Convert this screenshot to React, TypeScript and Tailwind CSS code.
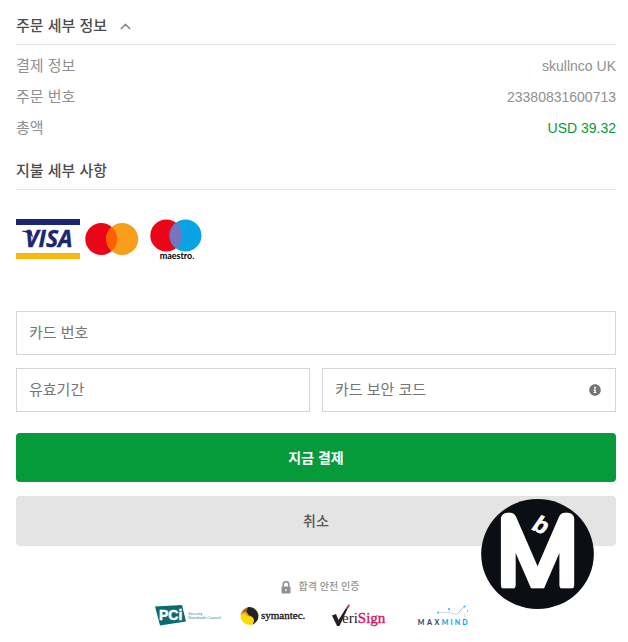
import { useState } from 'react';
import { ChevronUp } from 'lucide-react';
import { FaInfoCircle } from 'react-icons/fa';

const fontStack = "font-['Liberation_Sans','Noto_Sans_CJK_KR',sans-serif]";

const orderRows = [
  { label: '결제 정보', value: 'skullnco UK', color: 'text-[#909090]' },
  { label: '주문 번호', value: '23380831600713', color: 'text-[#909090]' },
  { label: '총액', value: 'USD 39.32', color: 'text-[#079a3b]' },
];

const inputClass =
  'h-11 w-full border border-[#d5d5d5] bg-white px-3 pb-0.5 text-[15px] text-gray-800 placeholder:text-[#757575] outline-none focus:border-[#079a3b]';

function VisaLogo() {
  return (
    <svg width="64" height="40" viewBox="0 0 64 40" role="img" aria-label="Visa">
      <rect width="64" height="6" fill="#1a2770" />
      <rect y="34" width="64" height="6" fill="#f4b90a" />
      <text x="9" y="28" fontSize="23" fontWeight="700" fontStyle="italic" fontFamily="Open Sans" fill="#1a2770" stroke="#1a2770" strokeWidth="0.4">
        VISA
      </text>
      <path d="M6 11.800h9.500l1.500 7Q13 13.500 6 12.600z" fill="#1a2770" />
    </svg>
  );
}

function MastercardLogo() {
  return (
    <svg width="54" height="40" viewBox="0 0 54 40" role="img" aria-label="Mastercard">
      <circle cx="16.300" cy="20" r="16" fill="#eb0519" />
      <circle cx="37.200" cy="20" r="16" fill="#f79f1b" />
      <path d="M26.750 7.900a16 16 0 0 1 0 24.200a16 16 0 0 1 0-24.200z" fill="#ff5f00" />
    </svg>
  );
}

function MaestroLogo() {
  return (
    <svg width="52" height="42" viewBox="0 0 52 42" role="img" aria-label="Maestro">
      <circle cx="16.300" cy="16.500" r="16" fill="#eb0519" />
      <circle cx="35.500" cy="16.500" r="16" fill="#09a3e3" />
      <path d="M25.900 3.700a16 16 0 0 1 0 25.600a16 16 0 0 1 0-25.600z" fill="#7673c0" />
      <text x="27" y="40" textAnchor="middle" fontSize="9" fontWeight="700" fontFamily="Lato" fill="#000">
        maestro.
      </text>
    </svg>
  );
}

function PciLogo() {
  return (
    <svg width="74" height="26" viewBox="0 0 74 26" role="img" aria-label="PCI Security Standards Council">
      <path d="M8 2.500L35 1l4 16.500L13 21.500z" fill="#0c6b72" />
      <text x="12" y="16" fontSize="14" fontWeight="700" fill="#fff" stroke="#fff" strokeWidth="0.5">
        PCi
      </text>
      <text x="41" y="11" fontSize="4" fill="#3d8b90">Security</text>
      <text x="41" y="15" fontSize="4" fill="#3d8b90">Standards Council</text>
    </svg>
  );
}

function SymantecLogo() {
  return (
    <svg width="74" height="26" viewBox="0 0 74 26" role="img" aria-label="Symantec">
      <circle cx="14.500" cy="12" r="9" fill="#fcd90b" />
      <path d="M13 3.200a9 9 0 0 1 4 17.500a5 5 0 0 0-1-8.500a5 5 0 0 1-3-9z" fill="#222" />
      <path d="M13 3.200q-6 2-7 7.500q2.500-3 6-2q-1-3 1-5.500z" fill="#8a6a3a" />
      <path d="M6 9.500q3-3 6-1q1 3 4 4q-5 0-5.500-2.500q-2-1-4.500 1z" fill="#f3972c" />
      <text x="26" y="15" fontSize="11" fontFamily="Liberation Serif" fill="#111" stroke="#111" strokeWidth="0.3">
        symantec.
      </text>
    </svg>
  );
}

function VerisignLogo() {
  return (
    <svg width="74" height="26" viewBox="0 0 74 26" role="img" aria-label="VeriSign">
      <path d="M9 11.500l4-1.500 2.500 6L23 4l1.500 1-8 17h-2.500z" fill="#222" />
      <path d="M23 4l3-4 .8 1.500-2 3.500z" fill="#cb1967" />
      <text x="19" y="19" fontSize="15" fontFamily="Liberation Serif" fill="#222">
        eri<tspan fill="#cb1967" stroke="#cb1967" strokeWidth="0.4">Sign</tspan>
      </text>
    </svg>
  );
}

function MaxmindLogo() {
  return (
    <svg width="74" height="26" viewBox="0 0 74 26" role="img" aria-label="MaxMind">
      <path d="M27 8.500h11v-4m0 4l8 2M54 15V9" fill="none" stroke="#ccd4da" strokeWidth="0.800" />
      <path d="M46 10.500l7-8" fill="none" stroke="#a3b0ba" strokeWidth="0.800" />
      <g fill="#29abe2">
        <circle cx="27" cy="8.500" r="0.900" />
        <circle cx="38" cy="5" r="0.900" />
        <circle cx="53.500" cy="2.500" r="0.900" />
        <circle cx="56.500" cy="7" r="0.700" />
      </g>
      <g fontSize="7" fontWeight="900" fontFamily="Lato" textAnchor="middle">
        <text x="10" y="21" fill="#34495a">M</text>
        <text x="18.500" y="21" fill="#34495a">A</text>
        <text x="26" y="21" fill="#34495a">X</text>
        <text x="34" y="21" fill="#17a7e0">M</text>
        <text x="40.500" y="21" fill="#17a7e0">I</text>
        <text x="46.500" y="21" fill="#17a7e0">N</text>
        <text x="54" y="21" fill="#17a7e0">D</text>
      </g>
    </svg>
  );
}

function MbBadge() {
  return (
    <svg width="113" height="110" viewBox="34 56 338 330" className="overflow-visible" role="img" aria-label="Mb">
      <ellipse cx="203" cy="221" rx="169" ry="165" fill="#0b0e12" />
      <text x="203" y="313" textAnchor="middle" fontSize="272" fontWeight="100" fontFamily="Inter" fill="#fff" stroke="#fff" strokeWidth="38" strokeLinejoin="round">
        M
      </text>
      {/* squares off the rounded feet */}
      <rect x="85" y="324" width="236" height="12" fill="#0b0e12" />
      <text x="184" y="147" fontSize="70" fontWeight="700" fontStyle="italic" fill="#fff" stroke="#fff" strokeWidth="2" transform="rotate(24 184 147)">
        b
      </text>
    </svg>
  );
}

function LockIcon() {
  return (
    <svg width="10" height="13" viewBox="0 0 10 13" fill="none" aria-hidden="true">
      <path d="M2.200 6V3.500a2.800 2.800 0 0 1 5.600 0V6" stroke="#909090" strokeWidth="1.500" />
      <rect x="0.500" y="5.500" width="9" height="7" rx="1" fill="#909090" />
      <path d="M5 8v2.200" stroke="#fff" strokeWidth="1.200" />
    </svg>
  );
}

export default function App() {
  const [open, setOpen] = useState(true);

  return (
    <main className={`bg-white px-3 pt-4 pb-3 pl-4 text-[15px] ${fontStack}`}>
      <section>
        <h2 className="border-b border-[#e5e5e5] pb-2 leading-5 font-medium text-[#4d4d4d]">
          <button type="button" onClick={() => setOpen(!open)} className="flex items-center gap-2.5">
            주문 세부 정보
            <ChevronUp size={17} className={open ? 'text-[#888]' : 'rotate-180 text-[#888]'} />
          </button>
        </h2>

        {open && (
          <dl className="mt-1.5">
            {orderRows.map((row) => (
              <div key={row.label} className="flex h-[31px] items-center justify-between">
                <dt className="text-[#909090]">{row.label}</dt>
                <dd className={`pb-0.5 text-sm ${row.color}`}>{row.value}</dd>
              </div>
            ))}
          </dl>
        )}
      </section>

      <section>
        <h2 className="mt-[17px] border-b border-[#e5e5e5] pb-2 leading-5 font-medium text-[#4d4d4d]">
          지불 세부 사항
        </h2>

        <div className="mt-[29px] flex items-start">
          <VisaLogo />
          <div className="ml-[5px]">
            <MastercardLogo />
          </div>
          <div className="ml-[11px]">
            <MaestroLogo />
          </div>
        </div>

        <form className="mt-[50px]" onSubmit={(e) => e.preventDefault()}>
          <input aria-label="카드 번호" inputMode="numeric" placeholder="카드 번호" className={inputClass} />

          <div className="mt-[13px] grid grid-cols-2 gap-3">
            <input aria-label="유효기간" placeholder="유효기간" className={inputClass} />
            <div className="relative">
              <input aria-label="카드 보안 코드" inputMode="numeric" placeholder="카드 보안 코드" className={inputClass} />
              <FaInfoCircle size={12} className="absolute inset-y-0 right-[15px] my-auto text-[#757575]" />
            </div>
          </div>

          <button type="submit" className="mt-[21px] h-[49px] w-full rounded bg-[#079a3b] text-sm font-bold text-white">
            지금 결제
          </button>

          <div className="relative mt-3.5">
            <button type="button" className="h-[50px] w-full rounded bg-[#e4e4e4] text-sm font-medium text-[#555]">
              취소
            </button>
            <div className="absolute top-[3px] right-[22px]">
              <MbBadge />
            </div>
          </div>
        </form>
      </section>

      <footer className="mt-8">
        <p className="flex items-center justify-center gap-2 pl-2 text-[10px] leading-[18px] font-medium text-[#909090]">
          <LockIcon />
          합격 안전 인증
        </p>
        <div className="mt-2 flex justify-center gap-3.5">
          <PciLogo />
          <SymantecLogo />
          <VerisignLogo />
          <MaxmindLogo />
        </div>
      </footer>
    </main>
  );
}
